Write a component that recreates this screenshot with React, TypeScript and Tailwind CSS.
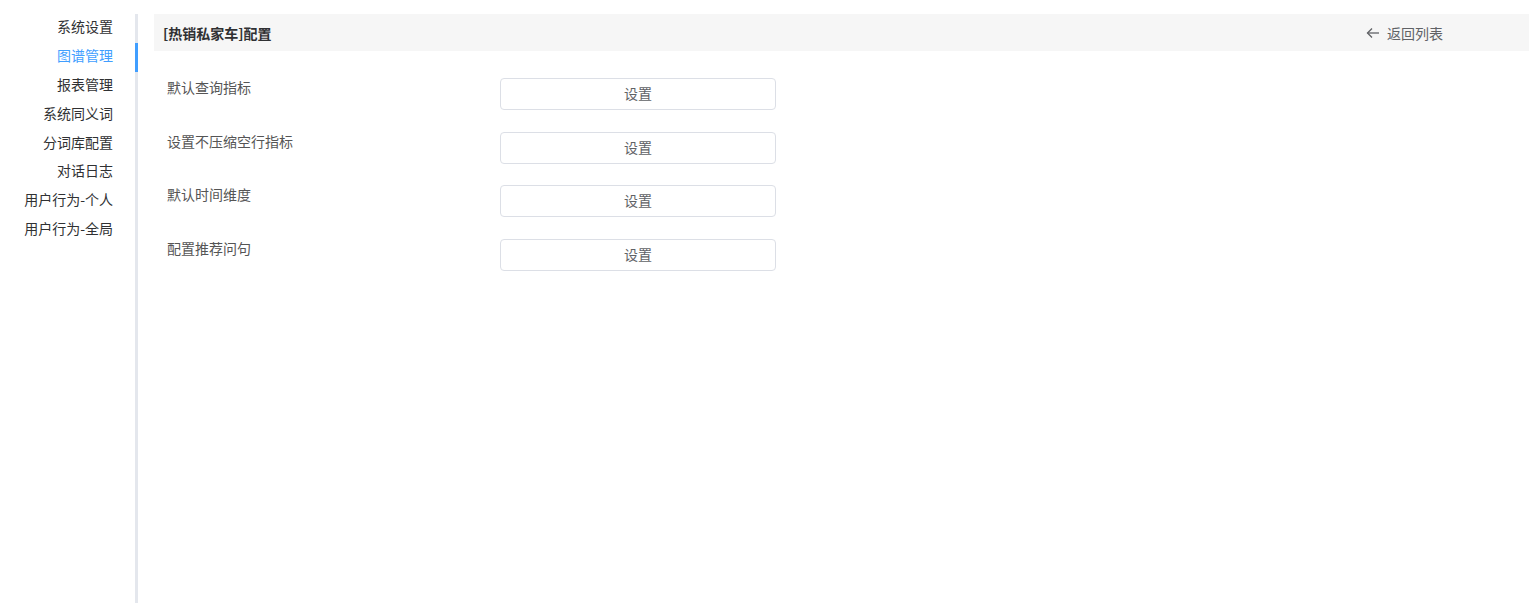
import React from 'react';

const navItems = [
  '系统设置',
  '图谱管理',
  '报表管理',
  '系统同义词',
  '分词库配置',
  '对话日志',
  '用户行为-个人',
  '用户行为-全局',
];

const configRows = ['默认查询指标', '设置不压缩空行指标', '默认时间维度', '配置推荐问句'];

const BackIcon = () => (
  <svg width="14" height="14" viewBox="0 0 14 14" fill="none" stroke="currentColor" strokeWidth="1.3">
    <path d="M13 7H1.5" />
    <path d="M6 2.5L1.5 7L6 11.5" />
  </svg>
);

export default function App() {
  return (
    <div
      className="flex min-h-[609px] bg-white text-sm"
      style={{ fontFamily: '"Noto Sans CJK SC", "Noto Sans", sans-serif' }}
    >
      <aside className="w-[138px] shrink-0 pt-[14px] pb-[6px]">
        <ul className="h-full border-r-[3px] border-[#e4e7ed]">
          {navItems.map((item, i) => (
            <li
              key={item}
              className={`relative h-[28.9px] leading-[24px] pr-[22px] text-right ${
                i === 1 ? 'text-[#409eff]' : 'text-[#303133]'
              }`}
            >
              {item}
              {i === 1 && <span className="absolute right-[-3px] top-0 h-[29px] w-[3px] bg-[#409eff]" />}
            </li>
          ))}
        </ul>
      </aside>

      <main className="flex-1 pl-[16px] pt-[14px]">
        <div className="flex h-[37px] items-center justify-between bg-[#f6f6f6] pl-[9px] pr-[86px]">
          <span className="font-bold text-[#303133]">[热销私家车]配置</span>
          <span className="flex items-center gap-[7px] text-[#606266]">
            <BackIcon />
            返回列表
          </span>
        </div>

        <div className="flex flex-col gap-[21.6px] pl-[13px] pt-[27px]">
          {configRows.map((label) => (
            <div key={label} className="flex items-start">
              <div className="w-[333px] leading-[18px] text-[#555]">{label}</div>
              <button className="h-[32px] w-[276px] rounded-[4px] border border-[#dcdfe6] bg-white pb-[2px] text-[#606266]">
                设置
              </button>
            </div>
          ))}
        </div>
      </main>
    </div>
  );
}
